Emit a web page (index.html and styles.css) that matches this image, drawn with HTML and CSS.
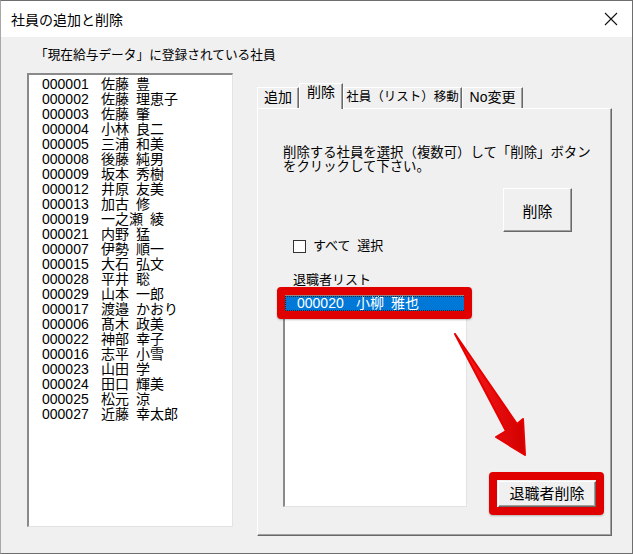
FILE: index.html
```html
<!DOCTYPE html>
<html lang="ja">
<head>
    <meta charset="UTF-8">
    <title>社員の追加と削除</title>
<link rel="stylesheet" href="styles.css">
</head>
<body>
<div class="window">
    <div class="titlebar">
        <span class="title">社員の追加と削除</span>
        <svg class="close" width="14" height="14" viewBox="0 0 14 14">
            <path d="M1 1 L13 13 M13 1 L1 13" stroke="#111" stroke-width="1.1" fill="none"/>
        </svg>
    </div>

    <div class="client">
        <div class="left_col">
            <div class="caption">「現在給与データ」に登録されている社員</div>
            <div class="listbox main_list">
                <div class="row"><span class="no">000001</span><span class="name">佐藤 豊</span></div>
                <div class="row"><span class="no">000002</span><span class="name">佐藤 理恵子</span></div>
                <div class="row"><span class="no">000003</span><span class="name">佐藤 肇</span></div>
                <div class="row"><span class="no">000004</span><span class="name">小林 良二</span></div>
                <div class="row"><span class="no">000005</span><span class="name">三浦 和美</span></div>
                <div class="row"><span class="no">000008</span><span class="name">後藤 純男</span></div>
                <div class="row"><span class="no">000009</span><span class="name">坂本 秀樹</span></div>
                <div class="row"><span class="no">000012</span><span class="name">井原 友美</span></div>
                <div class="row"><span class="no">000013</span><span class="name">加古 修</span></div>
                <div class="row"><span class="no">000019</span><span class="name">一之瀬 綾</span></div>
                <div class="row"><span class="no">000021</span><span class="name">内野 猛</span></div>
                <div class="row"><span class="no">000007</span><span class="name">伊勢 順一</span></div>
                <div class="row"><span class="no">000015</span><span class="name">大石 弘文</span></div>
                <div class="row"><span class="no">000028</span><span class="name">平井 聡</span></div>
                <div class="row"><span class="no">000029</span><span class="name">山本 一郎</span></div>
                <div class="row"><span class="no">000017</span><span class="name">渡邉 かおり</span></div>
                <div class="row"><span class="no">000006</span><span class="name">髙木 政美</span></div>
                <div class="row"><span class="no">000022</span><span class="name">神部 幸子</span></div>
                <div class="row"><span class="no">000016</span><span class="name">志平 小雪</span></div>
                <div class="row"><span class="no">000023</span><span class="name">山田 学</span></div>
                <div class="row"><span class="no">000024</span><span class="name">田口 輝美</span></div>
                <div class="row"><span class="no">000025</span><span class="name">松元 涼</span></div>
                <div class="row"><span class="no">000027</span><span class="name">近藤 幸太郎</span></div>
            </div>
        </div>

        <div class="right_col">
            <div class="tabs">
                <div class="tab tab_add">追加</div>
                <div class="tab tab_del active">削除</div>
                <div class="tab tab_move">社員（リスト）移動</div>
                <div class="tab tab_no">No変更</div>
            </div>
            <div class="panel">
                <p class="hint">削除する社員を選択（複数可）して「削除」ボタン<br>をクリックして下さい。</p>
                <div class="btn_row">
                    <button class="btn btn_delete">削除</button>
                </div>
                <label class="check"><span class="box"></span>すべて 選択</label>
                <div class="list_label">退職者リスト</div>
                <div class="retire_row">
                    <div class="listbox retire_list">
                        <div class="row selected"><span class="no">000020</span><span class="name">小柳 雅也</span></div>
                        <div class="mark mark_item"></div>
                    </div>
                    <div class="btn_wrap">
                        <button class="btn btn_retire">退職者削除</button>
                        <div class="mark mark_btn"></div>
                    </div>
                </div>
                <!-- 注釈の矢印 -->
                <svg class="arrow" width="100" height="150" viewBox="0 0 100 150">
                    <defs>
                        <linearGradient id="red" x1="0" y1="0" x2="1" y2="0">
                            <stop offset="0" stop-color="#ff1f1f"/>
                            <stop offset="1" stop-color="#d20000"/>
                        </linearGradient>
                    </defs>
                    <polygon points="15,14 77,104 83,99 85,135 56,117 66,111"
                             fill="url(#red)" stroke="#e60000" stroke-width="2" stroke-linejoin="round"/>
                </svg>
            </div>
        </div>
    </div>
</div>
</body>
</html>
```

FILE: styles.css
```css
body{
    margin:0;
    font-family: "Liberation Sans", "Noto Sans CJK JP", sans-serif;
    color:#000;
}
.window{
    width:633px;
    height:554px;
    box-sizing: border-box;
    border:1px solid #6e6e6e;
    border-left-color:#a8a8a8;
    display:flex;
    flex-direction:column;
    background-color:#f0f0f0;
}
.titlebar{
    height:36px;
    background-color:white;
    display:flex;
    align-items:center;
    padding-left:10px;
    padding-right:14px;
    flex-shrink:0;
}
.title{
    font-size:14px;
    flex:1;
}
.client{
    flex:1;
    display:flex;
    padding:10px 0 0 26px;
}
.left_col{
    width:206px;
}
.caption{
    font-size:12.7px;
    line-height:16px;
    margin-left:8px;
    white-space:nowrap;
}
.listbox{
    background-color:white;
    box-sizing:border-box;
    border-style:solid;
    border-width:2px 1px 1px 2px;
    border-color:#8a8a8a #e3e3e3 #e3e3e3 #8a8a8a;
}
.main_list{
    margin-top:10px;
    height:454px;
    padding:2px 0 0 13px;
}
.row{
    display:flex;
    height:15px;
    line-height:15px;
    font-size:14px;
    white-space:nowrap;
}
.row .no{
    width:59px;
}
.row .name{
    word-spacing:3px;
}
.right_col{
    margin-left:24px;
    margin-top:36px;
    width:355px;
}
.tabs{
    display:flex;
    align-items:flex-end;
    height:25px;
    position:relative;
    z-index:1;
}
.tab{
    box-sizing:border-box;
    height:21px;
    font-size:14px;
    line-height:17px;
    padding-top:1px;
    text-align:center;
    white-space:nowrap;
    background-color:#f0f0f0;
    border-top:1px solid #fff;
    border-left:1px solid #fff;
    border-right:1px solid #696969;
    box-shadow: inset -1px 0 #a0a0a0;
}
.tab.active{
    height:26px;
    margin-bottom:-1px;
    padding-top:0;
}
.tab_add{ width:42px; }
.tab_del{ width:44px; }
.tab_move{ width:119px; font-size:12.5px; }
.tab_no{ width:61px; }
.panel{
    position:relative;
    box-sizing:border-box;
    height:428px;
    border-style:solid;
    border-width:1px 1px 1px 1px;
    border-color:#fff #696969 #696969 #fff;
    box-shadow: inset -1px -1px #a0a0a0;
    padding:37px 15px 0 25px;
}
.hint{
    margin:0;
    font-size:13.4px;
    line-height:14px;
    white-space:nowrap;
}
.btn_row{
    display:flex;
    justify-content:flex-end;
    padding-right:24px;
    margin-top:14px;
}
.btn{
    font-family:inherit;
    font-size:15px;
    background-color:#f0f0f0;
    box-sizing:border-box;
    border:1px solid;
    border-color:#fff #696969 #696969 #fff;
    box-shadow: inset -1px -1px #a0a0a0;
    padding:0;
    color:#000;
}
.btn_delete{
    width:69px;
    height:44px;
}
.check{
    display:flex;
    align-items:center;
    margin:7px 0 0 10px;
    font-size:13px;
    line-height:14px;
    word-spacing:3px;
}
.box{
    width:13px;
    height:13px;
    box-sizing:border-box;
    background-color:white;
    border:1px solid #333;
    margin-right:7px;
}
.list_label{
    margin:19px 0 0 10px;
    font-size:13px;
    line-height:16px;
}
.retire_row{
    display:flex;
    align-items:flex-end;
    margin-top:6px;
}
.retire_list{
    position:relative;
    width:184px;
    height:213px;
    padding-top:0;
}
.retire_list .row{
    color:white;
    padding-left:12px;
}
.selected{
    background-color:#0078d7;
    outline:1px dotted #222;
    outline-offset:-1px;
}
.btn_wrap{
    position:relative;
    margin-left:auto;
}
.btn_retire{
    display:block;
    width:98px;
    height:26px;
    line-height:24px;
}
/* 赤い囲み */
.mark{
    position:absolute;
    box-sizing:border-box;
    border:8px solid #e00000;
    border-radius:4px;
    box-shadow:0 1px 2px rgba(0,0,0,0.25);
}
.mark_item{
    left:-8px;
    top:-9px;
    width:195px;
    height:32px;
}
.mark_btn{
    left:-9px;
    top:-9px;
    width:115px;
    height:43px;
}
.arrow{
    position:absolute;
    left:182px;
    top:211px;
}
```
